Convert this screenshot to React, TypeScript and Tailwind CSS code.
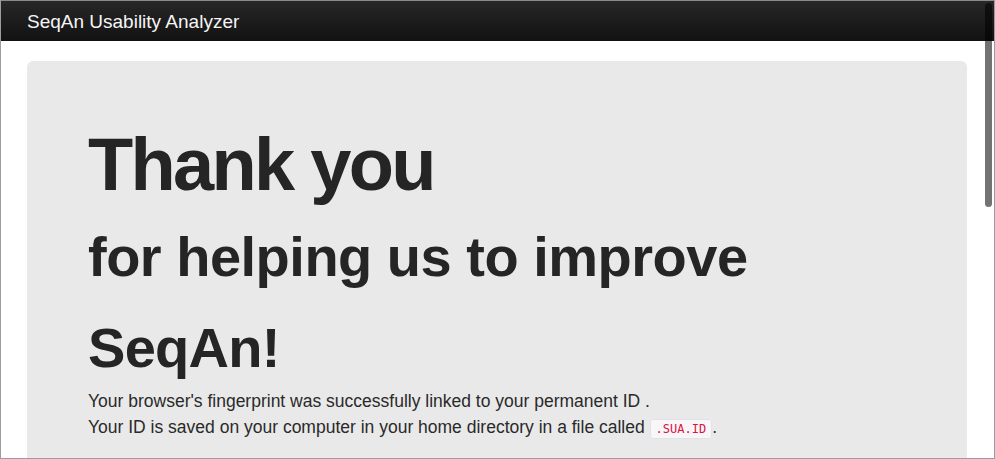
export default function App() {
  return (
    <div className="relative h-[459px] w-[995px] overflow-hidden border border-t-0 border-[#9d9d9d] bg-white font-['Liberation_Sans',Arial,sans-serif] text-[#252525]">
      {/* Navbar */}
      <div className="flex h-[41px] items-center border-t border-[#8a8a8a] bg-gradient-to-b from-[#272727] to-[#121212] px-[26px]">
        <span className="pt-px text-[19px] leading-none text-[#f5f5f5]">SeqAn Usability Analyzer</span>
      </div>

      {/* Content */}
      <div className="px-[26px] pt-[20px]">
        <div className="h-[420px] w-[940px] rounded-md bg-[#e9e9e9] px-[61px] pt-[67px]">
          <h1 className="text-[74px] font-bold leading-[74px] tracking-[-2.7px]">Thank you</h1>
          <h2 className="mt-[27px] text-[56px] font-bold leading-[56px] tracking-[-0.5px]">for helping us to improve</h2>
          <h2 className="mt-[35px] text-[56px] font-bold leading-[56px] tracking-[-0.7px]">SeqAn!</h2>
          <div className="mt-[12px] text-[17.5px] leading-[26px] text-[#2a2a2a]">
            <p>Your browser's fingerprint was successfully linked to your permanent ID .</p>
            <p>
              Your ID is saved on your computer in your home directory in a file called{' '}
              <code className="rounded-[3px] border border-[#e1e1e8] bg-[#f7f7f9] px-[5px] py-[2px] font-['DejaVu_Sans_Mono',monospace] text-[12px] text-[#dd1144]">
                .SUA.ID
              </code>
              .
            </p>
          </div>
        </div>
      </div>

      {/* Overlay scrollbar */}
      <div className="absolute right-[2px] top-[3px] h-[204px] w-[7px] rounded-full bg-black/55" />
    </div>
  );
}
